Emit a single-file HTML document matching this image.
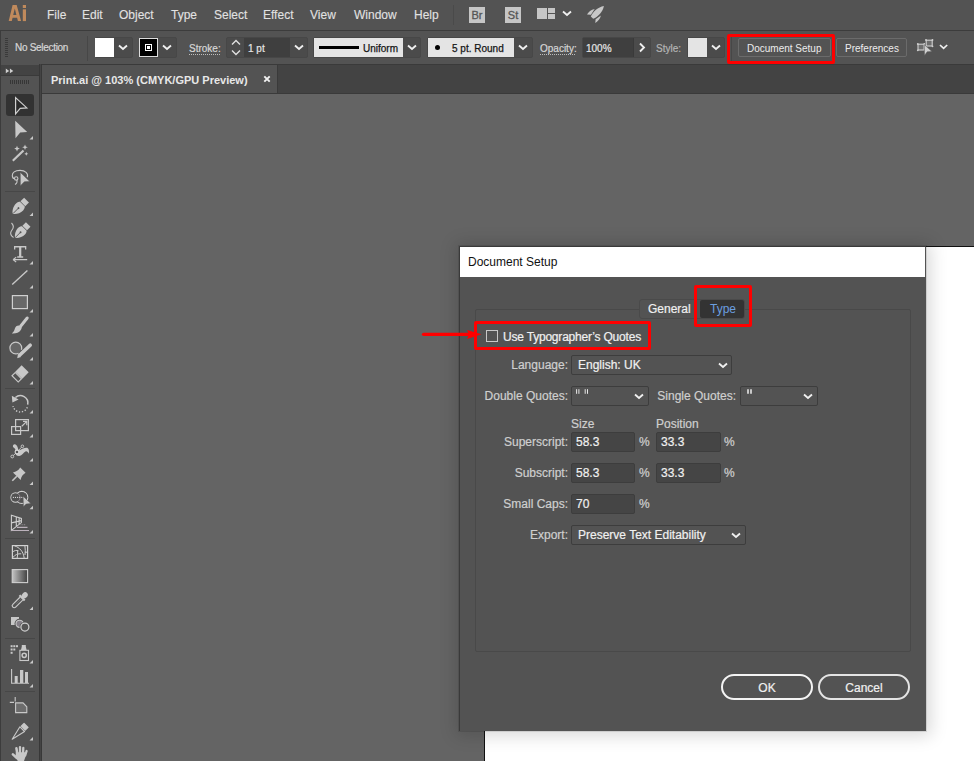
<!DOCTYPE html>
<html><head><meta charset="utf-8">
<style>
*{margin:0;padding:0;box-sizing:border-box}
html,body{width:974px;height:761px;overflow:hidden;background:#646464;font-family:"Liberation Sans",sans-serif;position:relative}
.a{position:absolute}
.t{position:absolute;white-space:nowrap;line-height:1}
#menubar{left:0;top:0;width:974px;height:30px;background:#535353}
.menu{color:#e2e2e2;font-size:12px;top:9px;-webkit-text-stroke:0.1px currentColor}
#ctrl{left:0;top:30px;width:974px;height:35px;background:#535353;border-top:1px solid #3c3c3c;border-bottom:1px solid #3c3c3c}
#tabbar{left:42px;top:64px;width:932px;height:30px;background:#434343;border-top:1px solid #3a3a3a;border-bottom:1px solid #3a3a3a}
#tab{left:42px;top:65px;width:236px;height:28px;background:#535353;border-right:1px solid #3a3a3a}
#toolbar{left:0;top:64px;width:39px;height:697px;background:#535353}
#tbgap{left:39px;top:64px;width:3px;height:697px;background:#3b3b3b;border-left:1px solid #383838;border-right:1px solid #383838;background:#444}
#tbhead{left:0;top:65px;width:39px;height:11px;background:#434343;border-bottom:1px solid #3a3a3a}
.lbl{color:#d6d6d6;font-size:10px}
.fld{background:#454545;border:1px solid #3e3e3e;border-radius:2px}
.sep{background:#464646}
#artboard{left:484px;top:246px;width:500px;height:600px;background:#fff;border-left:1px solid #111;border-top:1px solid #111}
#dlg{left:459px;top:246px;width:467px;height:485px;background:#535353;border-left:1px solid #3a3a3a;border-top:1px solid #3a3a3a;box-shadow:0 0 0 1px rgba(0,0,0,0.1),1px 1px 16px 4px rgba(0,0,0,0.15)}
#dlgtitle{left:460px;top:247px;width:465px;height:30px;background:#fff}
.dl{color:#cfcfcf;font-size:12px}
.dv{color:#f0f0f0;font-size:12px}
.dd{background:#535353;border:1px solid #3d3d3d;border-radius:2px}
.inp{background:#454545;border:1px solid #3d3d3d;border-radius:2px}
.red{border:3px solid #ff0000;border-radius:2px}
.dl,.dv,.lbl{-webkit-text-stroke:0.2px currentColor}
</style></head><body>
<!-- menu bar -->
<div id="menubar" class="a"></div>
<svg class="a" style="left:0;top:0" width="30" height="30"><path fill-rule="evenodd" d="M8.7 21.1 L12.6 5 H16.7 L21.1 21.1 H17.9 L17.1 17.8 H12.6 L11.8 21.1 Z M13.2 14.9 H16.4 L14.8 8.4 Z" fill="#c08a5c"/><rect x="22.8" y="5" width="3.2" height="3" fill="#c08a5c"/><rect x="22.8" y="9.3" width="3.2" height="11.8" fill="#c08a5c"/></svg>
<div class="t menu" style="left:47px">File</div>
<div class="t menu" style="left:82px">Edit</div>
<div class="t menu" style="left:119px">Object</div>
<div class="t menu" style="left:171px">Type</div>
<div class="t menu" style="left:214px">Select</div>
<div class="t menu" style="left:263px">Effect</div>
<div class="t menu" style="left:310px">View</div>
<div class="t menu" style="left:354px">Window</div>
<div class="t menu" style="left:414px">Help</div>
<div class="a" style="left:453px;top:5px;width:1px;height:20px;background:#4a4a4a"></div>
<div class="a" style="left:469px;top:7px;width:16px;height:16px;background:#c6c6c6"></div>
<div class="t" style="left:469px;top:10px;width:16px;text-align:center;font-size:11px;color:#555;-webkit-text-stroke:0.3px #555">Br</div>
<div class="a" style="left:505px;top:7px;width:16px;height:16px;background:#c6c6c6"></div>
<div class="t" style="left:505px;top:10px;width:16px;text-align:center;font-size:11px;color:#555;-webkit-text-stroke:0.3px #555">St</div>
<div class="a" style="left:537px;top:8px;width:10px;height:11px;background:#c6c6c6"></div>
<div class="a" style="left:548px;top:8px;width:7px;height:5px;background:#c6c6c6"></div>
<div class="a" style="left:548px;top:14px;width:7px;height:5px;background:#c6c6c6"></div>
<svg class="a" style="left:562px;top:10px" width="10" height="7"><path d="M1 1.5 L5 5 L9 1.5" fill="none" stroke="#f0f0f0" stroke-width="1.85"/></svg>
<svg class="a" style="left:582px;top:2px" width="26" height="24" viewBox="582 2 26 24"><path d="M603.9 5.9 C598 7, 593 11.5, 590.8 16.6 L593.2 18.8 C598.3 16.5, 602.8 11.8, 603.9 5.9 Z M594.7 9 C591 9.8, 588.5 12, 587 14.6 L590.9 14.8 Z M600.9 15.6 L595.6 19.2 L595.3 23 C598 21.5, 600.3 18.5, 600.9 15.6 Z" fill="#c8c8c8"/></svg>

<!-- control bar -->
<div id="ctrl" class="a"></div>
<div class="a" style="left:0;top:31px;width:1px;height:33px;background:#3c3c3c"></div>
<!-- grip -->
<div class="a" style="left:5px;top:38px;width:3px;height:19px;background:repeating-linear-gradient(#3a3a3a 0 1px,transparent 1px 2px)"></div>
<div class="t lbl" style="left:15px;top:43px;letter-spacing:-0.3px">No Selection</div>
<div class="a" style="left:87px;top:36px;width:1px;height:25px;background:#474747"></div>
<!-- fill -->
<div class="a fld" style="left:95px;top:37px;width:38px;height:21px;background:#4b4b4b;border-color:#474747"></div>
<div class="a" style="left:95px;top:38px;width:19px;height:19px;background:#fff"></div>
<svg class="a" style="left:118px;top:44px" width="10" height="7"><path d="M1 1.5 L5 5 L9 1.5" fill="none" stroke="#f0f0f0" stroke-width="1.85"/></svg>
<!-- stroke -->
<div class="a fld" style="left:139px;top:37px;width:38px;height:21px;background:#4b4b4b;border-color:#474747"></div>
<div class="a" style="left:139px;top:38px;width:19px;height:19px;background:#000;border:1px solid #ddd"></div>
<div class="a" style="left:145px;top:44px;width:7px;height:7px;border:1px solid #fff"></div>
<div class="a" style="left:147px;top:46px;width:3px;height:3px;background:#fff"></div>
<svg class="a" style="left:162px;top:44px" width="10" height="7"><path d="M1 1.5 L5 5 L9 1.5" fill="none" stroke="#f0f0f0" stroke-width="1.85"/></svg>
<div class="t lbl" style="left:189px;top:44px">Stroke:</div>
<div class="a" style="left:189px;top:54px;width:32px;height:1px;background:repeating-linear-gradient(90deg,#bdbdbd 0 1px,transparent 1px 2px)"></div>
<!-- stroke weight -->
<div class="a fld" style="left:226px;top:37px;width:82px;height:21px;background:#4b4b4b;border-color:#474747"></div>
<div class="a" style="left:244px;top:38px;width:46px;height:19px;background:#3f3f3f"></div>
<svg class="a" style="left:230px;top:38px" width="12" height="19"><path d="M2 6.5 L6 2.5 L10 6.5 M2 12.5 L6 16.5 L10 12.5" fill="none" stroke="#e0e0e0" stroke-width="1.4"/></svg>
<div class="t lbl" style="left:248px;top:44px;color:#e6e6e6">1 pt</div>
<svg class="a" style="left:294px;top:44px" width="10" height="7"><path d="M1 1.5 L5 5 L9 1.5" fill="none" stroke="#f0f0f0" stroke-width="1.85"/></svg>
<!-- uniform -->
<div class="a fld" style="left:313px;top:37px;width:108px;height:21px;background:#4b4b4b;border-color:#474747"></div>
<div class="a" style="left:314px;top:38px;width:89px;height:19px;background:#e4e4e4"></div>
<div class="a" style="left:319px;top:46px;width:40px;height:3px;background:#000"></div>
<div class="t" style="left:363px;top:44px;font-size:10px;color:#151515;-webkit-text-stroke:0.25px #151515">Uniform</div>
<svg class="a" style="left:407px;top:44px" width="10" height="7"><path d="M1 1.5 L5 5 L9 1.5" fill="none" stroke="#f0f0f0" stroke-width="1.85"/></svg>
<!-- profile -->
<div class="a fld" style="left:427px;top:37px;width:106px;height:21px;background:#4b4b4b;border-color:#474747"></div>
<div class="a" style="left:428px;top:38px;width:86px;height:19px;background:#e4e4e4"></div>
<div class="a" style="left:435px;top:45px;width:5px;height:5px;border-radius:50%;background:#000"></div>
<div class="t" style="left:452px;top:44px;font-size:10px;color:#151515;-webkit-text-stroke:0.25px #151515">5 pt. Round</div>
<svg class="a" style="left:518px;top:44px" width="10" height="7"><path d="M1 1.5 L5 5 L9 1.5" fill="none" stroke="#f0f0f0" stroke-width="1.85"/></svg>
<!-- opacity -->
<div class="t lbl" style="left:540px;top:44px">Opacity:</div>
<div class="a" style="left:540px;top:54px;width:36px;height:1px;background:repeating-linear-gradient(90deg,#bdbdbd 0 1px,transparent 1px 2px)"></div>
<div class="a fld" style="left:582px;top:37px;width:69px;height:21px;background:#4b4b4b;border-color:#474747"></div>
<div class="a" style="left:583px;top:38px;width:50px;height:19px;background:#3f3f3f"></div>
<div class="t lbl" style="left:586px;top:44px;color:#e6e6e6">100%</div>
<div class="a" style="left:633px;top:38px;width:1px;height:19px;background:#3a3a3a"></div>
<svg class="a" style="left:638px;top:42px" width="8" height="11"><path d="M2 1.5 L6 5.5 L2 9.5" fill="none" stroke="#f0f0f0" stroke-width="1.85"/></svg>
<!-- style -->
<div class="t lbl" style="left:656px;top:44px;color:#b4b4b4">Style:</div>
<div class="a fld" style="left:687px;top:37px;width:38px;height:21px;background:#4b4b4b;border-color:#474747"></div>
<div class="a" style="left:688px;top:38px;width:19px;height:19px;background:#e4e4e4"></div>
<svg class="a" style="left:711px;top:44px" width="10" height="7"><path d="M1 1.5 L5 5 L9 1.5" fill="none" stroke="#f0f0f0" stroke-width="1.85"/></svg>
<div class="a" style="left:731px;top:36px;width:1px;height:25px;background:#474747"></div>
<!-- buttons -->
<div class="a" style="left:738px;top:38px;width:93px;height:19px;border:1px solid #6b6b6b;border-radius:2px"></div>
<div class="t" style="left:747px;top:44px;font-size:10px;color:#ececec">Document Setup</div>
<div class="a" style="left:836px;top:38px;width:71px;height:19px;border:1px solid #6b6b6b;border-radius:2px"></div>
<div class="t" style="left:845px;top:44px;font-size:10px;color:#ececec">Preferences</div>
<div class="a red" style="left:727px;top:34px;width:108px;height:30px"></div>
<!-- icon -->
<svg class="a" style="left:912px;top:36px" width="40" height="22" viewBox="912 36 40 22">
<rect x="918" y="44.2" width="6" height="5.8" fill="#6e6e6e" stroke="#d0d0d0" stroke-width="1.1"/>
<rect x="926.2" y="40.2" width="6" height="5.8" fill="#6e6e6e" stroke="#d0d0d0" stroke-width="1.1"/>
<g fill="#d0d0d0"><circle cx="917.8" cy="44" r="0.9"/><circle cx="917.8" cy="50.3" r="0.9"/><circle cx="924.3" cy="44" r="0.9"/><circle cx="926" cy="40" r="0.9"/><circle cx="932.5" cy="40" r="0.9"/><circle cx="932.5" cy="46.3" r="0.9"/></g>
<path d="M924.2 44.6 L932 51.6 L927.2 51.8 L924.5 55.4 Z" fill="#cfcfcf" stroke="#535353" stroke-width="0.5"/>
<path d="M940 45 L943.6 48.4 L947.2 45" fill="none" stroke="#f0f0f0" stroke-width="1.7"/>
</svg>

<!-- tab bar -->
<div id="tabbar" class="a"></div>
<div id="tab" class="a"></div>
<div class="t" style="left:51px;top:75px;font-size:11px;font-weight:bold;color:#e8e8e8">Print.ai @ 103% (CMYK/GPU Preview)</div>
<svg class="a" style="left:262px;top:74px" width="10" height="10"><path d="M2.3 2.3 L7.7 7.7 M7.7 2.3 L2.3 7.7" stroke="#f2f2f2" stroke-width="1.9"/></svg>

<!-- toolbar -->
<div id="toolbar" class="a"></div>
<div id="tbgap" class="a"></div>
<div id="tbhead" class="a"></div>
<div class="a" style="left:0;top:64px;width:1px;height:697px;background:#3c3c3c"></div>
<svg class="a" style="left:0;top:0" width="40" height="761" viewBox="0 0 40 761">
<defs>
<linearGradient id="gr" x1="0" x2="1"><stop offset="0" stop-color="#c4c4c4"/><stop offset="0.5" stop-color="#808080"/><stop offset="1" stop-color="#404040"/></linearGradient>
</defs>
<g fill="none" stroke="#cfcfcf" stroke-width="1.1">
<path d="M5.8 68.6 L9.2 70.9 L5.8 73.2 Z M9.9 68.6 L13.3 70.9 L9.9 73.2 Z" fill="#cfcfcf" stroke="none"/>
</g>
<g fill="#363636"><rect x="10" y="80" width="1" height="4"/><rect x="12" y="80" width="1" height="4"/><rect x="14" y="80" width="1" height="4"/><rect x="16" y="80" width="1" height="4"/><rect x="18" y="80" width="1" height="4"/><rect x="20" y="80" width="1" height="4"/><rect x="22" y="80" width="1" height="4"/><rect x="24" y="80" width="1" height="4"/><rect x="26" y="80" width="1" height="4"/><rect x="28" y="80" width="1" height="4"/></g>
<rect x="6" y="94" width="28" height="22" rx="3" fill="#323232"/>
<!-- separators -->
<g fill="#474747"><rect x="5" y="191" width="30" height="1"/><rect x="5" y="388" width="30" height="1"/><rect x="5" y="538" width="30" height="1"/><rect x="5" y="638" width="30" height="1"/><rect x="5" y="691" width="30" height="1"/></g>
<!-- corner triangles -->
<g fill="#c8c8c8">
<path d="M33 136 V139.5 H29.5 Z"/><path d="M33 212.5 V216 H29.5 Z"/><path d="M33 261 V264.5 H29.5 Z"/><path d="M33 285 V288.5 H29.5 Z"/>
<path d="M33 309 V312.5 H29.5 Z"/><path d="M33 333 V336.5 H29.5 Z"/><path d="M33 357 V360.5 H29.5 Z"/><path d="M33 381 V384.5 H29.5 Z"/>
<path d="M33 410 V413.5 H29.5 Z"/><path d="M33 434 V437.5 H29.5 Z"/><path d="M33 458 V461.5 H29.5 Z"/><path d="M33 481.5 V485 H29.5 Z"/>
<path d="M33 505.8 V509.3 H29.5 Z"/><path d="M33 530 V533.5 H29.5 Z"/><path d="M33 606.6 V610.1 H29.5 Z"/><path d="M33 660 V663.5 H29.5 Z"/>
<path d="M33 684 V687.5 H29.5 Z"/><path d="M33 737 V740.5 H29.5 Z"/>
</g>
<!-- selection -->
<path d="M15.6 97.6 L26.8 107.9 L20.2 108.3 L15.6 113.8 Z" fill="#2a2a2a" stroke="#d0d0d0" stroke-width="1.2" stroke-linejoin="miter"/>
<!-- direct selection -->
<path d="M15.2 120.8 L27.2 132 L20.2 132.6 L15.5 138.2 Z" fill="#c8c8c8"/>
<!-- magic wand -->
<path d="M12.8 160.8 L23.5 150.5" stroke="#c8c8c8" stroke-width="2.2"/>
<path d="M17 145.8 L17.8 147.8 L19.8 148.6 L17.8 149.4 L17 151.4 L16.2 149.4 L14.2 148.6 L16.2 147.8 Z M25 144.5 L25.8 146.5 L27.8 147.3 L25.8 148.1 L25 150.1 L24.2 148.1 L22.2 147.3 L24.2 146.5 Z M26.3 151.8 L26.9 153.2 L28.3 153.8 L26.9 154.4 L26.3 155.8 L25.7 154.4 L24.3 153.8 L25.7 153.2 Z" fill="#c8c8c8"/>
<!-- lasso -->
<path d="M27.3 177.2 C28.6 173.6, 25.2 170.4, 20 170.4 C14.8 170.4, 12.2 172.6, 12.3 175.6 C12.4 177.4, 13.4 178.6, 14.6 178.6" fill="none" stroke="#c8c8c8" stroke-width="1.1"/>
<circle cx="16.2" cy="178.4" r="1.7" fill="none" stroke="#c8c8c8" stroke-width="1.1"/>
<path d="M16.8 180 C17.4 181.8, 16.6 183.6, 15 184.4" fill="none" stroke="#c8c8c8" stroke-width="1.1"/>
<path d="M20.2 172.2 L29.9 181.6 L24.4 181.8 L20.3 185.9 Z" fill="#c8c8c8" stroke="#535353" stroke-width="0.6"/>
<!-- pen -->
<g transform="translate(20.3,206.3) rotate(45)"><path d="M0 10.6 C-2.2 9.6, -5.2 5, -5 1 C-4.9 -1, -4 -2.4, -3.4 -3 L3.4 -3 C4 -2.4, 4.9 -1, 5 1 C5.2 5, 2.2 9.6, 0 10.6 Z" fill="#c8c8c8"/><rect x="-3.4" y="-8.8" width="6.8" height="5.2" fill="#c8c8c8"/><path d="M0 10.2 V3" stroke="#535353" stroke-width="0.9"/><circle cx="0" cy="2.6" r="1" fill="#535353"/></g>
<!-- curvature pen -->
<g transform="translate(22.3,230.5) rotate(45) scale(0.95)"><path d="M0 10.6 C-2.2 9.6, -5.2 5, -5 1 C-4.9 -1, -4 -2.4, -3.4 -3 L3.4 -3 C4 -2.4, 4.9 -1, 5 1 C5.2 5, 2.2 9.6, 0 10.6 Z" fill="#c8c8c8"/><rect x="-3.4" y="-8.8" width="6.8" height="5.2" fill="#c8c8c8"/><path d="M0 10.2 V3" stroke="#535353" stroke-width="0.9"/><circle cx="0" cy="2.6" r="1" fill="#535353"/></g>
<path d="M11.5 223 C 13.5 225, 14 227.5, 12 230 C 10 232.5, 10 235.5, 13.5 237.5" fill="none" stroke="#c8c8c8" stroke-width="1.1"/>
<!-- type -->
<path d="M14 246 H26.3 V249.5 H25 V247.6 H21.3 V256.2 H23.2 V257.8 H17.2 V256.2 H19.1 V247.6 H15.3 V249.5 H14 Z" fill="#c8c8c8"/>
<path d="M13 259.6 H27.2 M13 259.6 L16.2 257.2 M13 259.6 L16.2 262" stroke="#c8c8c8" stroke-width="1.1" fill="none"/>
<!-- line -->
<path d="M12.2 284.6 L27.4 270.6" stroke="#c8c8c8" stroke-width="1.4"/>
<!-- rect -->
<rect x="12.4" y="295.6" width="15" height="13" fill="#686868" stroke="#cfcfcf" stroke-width="1.2"/>
<!-- brush -->
<path d="M27.2 318 L20.8 326" stroke="#c8c8c8" stroke-width="3" stroke-linecap="round"/>
<path d="M21.5 326.5 C19 324.5, 15.5 325.5, 14.8 328.8 C14.3 331, 13.2 332.5, 11.8 333.4 C15.5 333.8, 19 332.6, 20.6 330.2 C21.6 328.8, 22 327.5, 21.5 326.5 Z" fill="#c8c8c8"/>
<!-- shaper -->
<path d="M18.5 353.2 C17.8 353.6, 16.8 353.9, 15.8 353.9 C12.5 353.9, 9.9 351.3, 9.9 348 C9.9 344.7, 12.5 342.1, 15.8 342.1 C19.1 342.1, 21.7 344.7, 21.7 348 C21.7 348.6, 21.6 349.2, 21.4 349.7" fill="#666" stroke="#c8c8c8" stroke-width="1.2"/>
<path d="M30.2 345.2 L19.8 355" stroke="#c8c8c8" stroke-width="3.6" stroke-linecap="round"/>
<path d="M17.2 358.2 L18 354 L21 357 Z" fill="#c8c8c8"/>
<!-- eraser -->
<g transform="translate(20,374) rotate(45)"><rect x="-5" y="-7.3" width="10" height="9" fill="#c8c8c8"/><rect x="-4.4" y="2.3" width="8.8" height="4.6" fill="none" stroke="#c8c8c8" stroke-width="1.2"/></g>
<!-- rotate -->
<path d="M15.4 397.5 A7.5 7.5 0 0 1 27.7 404.6" fill="none" stroke="#c8c8c8" stroke-width="1.5"/>
<path d="M27.3 407.2 A7.5 7.5 0 0 1 13 406.2" fill="none" stroke="#c8c8c8" stroke-width="1.4" stroke-dasharray="1.3 1.7"/>
<path d="M11.8 395.8 L18.6 399.4 L12.4 402.4 Z" fill="#c8c8c8"/>
<!-- scale -->
<rect x="15.6" y="419.6" width="12.8" height="11" fill="none" stroke="#c8c8c8" stroke-width="1.2"/>
<rect x="11.6" y="426.6" width="9" height="7.8" fill="none" stroke="#c8c8c8" stroke-width="1.2"/>
<path d="M21.8 426.2 L26.8 421.4 M23 421.4 H26.8 V425.2" fill="none" stroke="#c8c8c8" stroke-width="1.2"/>
<!-- puppet warp -->
<path d="M13 447 C12.5 445, 14 443.8, 15.5 444.5 C17.5 445.5, 18 448, 18.5 450.5 C21 449.5, 24 448, 26.5 447.8 C28.5 447.8, 29.5 450.5, 28.8 453.8 C28 452, 27 451, 25.5 451.5 C23.5 452.5, 22 455.5, 19.5 456 C17 456.3, 15 455, 15.5 452.5 C16 450.5, 15.5 448.5, 13 447 Z" fill="#c8c8c8"/>
<path d="M12.3 456.5 L17 452 L22.4 446.3" stroke="#c8c8c8" stroke-width="0.9" fill="none"/>
<circle cx="17" cy="452" r="1.9" fill="#535353" stroke="#d8d8d8" stroke-width="1.1"/>
<circle cx="22.4" cy="446.3" r="1.3" fill="#535353" stroke="#d0d0d0" stroke-width="0.9"/>
<circle cx="12.3" cy="456.5" r="1.4" fill="#535353" stroke="#d0d0d0" stroke-width="0.9"/>
<!-- pin -->
<g transform="translate(19.85,473.2) rotate(45)"><path d="M-3.8 -4.3 H3.8 Q2.6 0.5, 5.45 4.3 H-5.45 Q-2.6 0.5, -3.8 -4.3 Z" fill="#c8c8c8"/><rect x="-0.8" y="4.3" width="1.6" height="6.4" fill="#c8c8c8"/></g>
<!-- shape builder -->
<clipPath id="cB"><circle cx="21.8" cy="497.4" r="5.6"/></clipPath>
<circle cx="15.5" cy="497.5" r="4.6" fill="none" stroke="#cfcfcf" stroke-width="1.1"/>
<circle cx="21.8" cy="497.4" r="6" fill="none" stroke="#cfcfcf" stroke-width="1.1"/>
<circle cx="15.5" cy="497.5" r="4.05" fill="#535353"/>
<circle cx="21.8" cy="497.4" r="5.45" fill="#535353"/>
<circle cx="15.5" cy="497.5" r="4.6" fill="none" stroke="#948a94" stroke-width="0.9" clip-path="url(#cB)"/>
<g fill="#d8d8d8"><circle cx="13.4" cy="497.4" r="0.6"/><circle cx="15.5" cy="497.4" r="0.6"/><circle cx="17.6" cy="497.4" r="0.6"/><circle cx="19.7" cy="497.4" r="0.6"/><circle cx="21.8" cy="497.4" r="0.6"/></g>
<path d="M23.1 496.2 L30.9 503.6 L26.1 504.1 L23.4 506.8 Z" fill="#c8c8c8" stroke="#535353" stroke-width="0.5"/>
<!-- perspective grid -->
<g fill="none" stroke="#cfcfcf" stroke-width="1.1">
<path d="M11.4 515.2 V530.4 L21.4 522.6 V518.4 Z M16.3 516.6 V526.6 M19.1 517.6 V524.4 M11.4 522.9 L21.4 520.6"/>
<path d="M11.4 530.5 H29 M17 527.4 H27.5" stroke="#bcb2bc"/>
<path d="M20.5 524.8 H26" stroke="#9a949a" stroke-dasharray="1 0.8"/>
</g>
<!-- mesh -->
<rect x="12.4" y="545.6" width="15.2" height="12.8" fill="none" stroke="#d2d2d2" stroke-width="1.2"/>
<path d="M14.5 545.8 C19.5 547.5, 23.5 551.5, 24.2 558.3 M24.9 545.8 C25.4 549, 25.4 552, 25 555 M25 552.2 H27.8 M12.4 552 C14.5 550.5, 16.5 550, 18.5 550.8 M12.6 557.8 C15 554.5, 18 553.5, 21.2 553.8 M17.6 550.5 C17.9 553, 17.6 556, 17.1 558.3" fill="none" stroke="#cfcfcf" stroke-width="1"/>
<!-- gradient -->
<rect x="12.2" y="569.6" width="15.4" height="13" fill="url(#gr)" stroke="#cfcfcf" stroke-width="1.1"/>
<!-- eyedropper -->
<g transform="translate(19.6,600.4) rotate(45)"><ellipse cx="0" cy="-7.2" rx="2.7" ry="3.4" fill="#c8c8c8"/><rect x="-3.7" y="-4.6" width="7.4" height="2.2" fill="#c8c8c8"/><path d="M-2 -2.4 V7.6 A2 2 0 0 0 2 7.6 V-2.4" fill="none" stroke="#c8c8c8" stroke-width="1.2"/><path d="M0 -2.2 V4.5" stroke="#8a8a8a" stroke-width="0.8" stroke-dasharray="0.8 0.6"/></g>
<!-- blend -->
<rect x="11" y="617" width="8" height="8" fill="#c8c8c8"/>
<circle cx="19.6" cy="623.8" r="3.8" fill="#858088" stroke="#535353" stroke-width="2.6"/>
<circle cx="19.6" cy="623.8" r="3.6" fill="#858088" stroke="#c8c8c8" stroke-width="1.1"/>
<circle cx="24.9" cy="627.1" r="4.1" fill="#535353" stroke="#535353" stroke-width="2.6"/>
<circle cx="24.9" cy="627.1" r="4" fill="#535353" stroke="#cfcfcf" stroke-width="1.2"/>
<!-- symbol sprayer -->
<g fill="#c8c8c8"><rect x="10.6" y="645.2" width="2" height="2"/><rect x="13.3" y="645.2" width="2" height="2"/><rect x="16" y="645.2" width="2" height="2"/><rect x="10.6" y="648.5" width="2" height="2"/><rect x="13.3" y="648.5" width="2" height="2"/><rect x="10.6" y="651.8" width="2" height="2"/><path d="M21.8 645 H25.8 V646.5 L26.6 650 H21 L21.8 646.5 Z"/></g>
<rect x="19.9" y="650.3" width="8.6" height="10.2" fill="none" stroke="#c8c8c8" stroke-width="1.1"/>
<circle cx="24.2" cy="655.3" r="2.1" fill="none" stroke="#c8c8c8" stroke-width="1.5"/>
<!-- column graph -->
<path d="M11.6 669 V683.2 H29" fill="none" stroke="#c8c8c8" stroke-width="1.1"/>
<g fill="#c8c8c8"><rect x="14.7" y="676" width="3" height="7"/><rect x="20" y="670" width="3.3" height="13"/><rect x="25" y="672" width="3" height="11"/></g>
<!-- artboard -->
<path d="M15.2 697 V701.6 M9.8 702.4 H14" stroke="#c8c8c8" stroke-width="1.1"/>
<path d="M15.6 702.9 H23 L26.8 706.8 V712.6 H15.6 Z" fill="#6c6c6c" stroke="#c8c8c8" stroke-width="1.1"/>
<!-- slice -->
<g transform="translate(20.4,731) rotate(45)"><path d="M0 11.6 L-3.3 -2.6 H3.3 Z" fill="none" stroke="#c8c8c8" stroke-width="1.1" stroke-linejoin="round"/><rect x="-3.4" y="-8.6" width="6.8" height="5.2" rx="0.6" fill="#c8c8c8"/></g>
<!-- hand -->
<g stroke="#c8c8c8" stroke-linecap="round" fill="none"><path d="M16.4 748.3 L17.3 753.5" stroke-width="2.5"/><path d="M20 747.1 V752.5" stroke-width="2.3"/><path d="M23.3 748 L23.1 753" stroke-width="2.3"/><path d="M26.6 751 L25.2 755.5" stroke-width="2.3"/><path d="M12.9 754.4 L16.6 757.8" stroke-width="2.6"/></g>
<path d="M15.8 752.2 H26 L25.2 757.5 L24 761 H17.8 L15.6 757.5 Z" fill="#c8c8c8"/>
</svg>

<!-- artboard + dialog -->
<div id="artboard" class="a"></div>
<div id="dlg" class="a"></div>
<div id="dlgtitle" class="a"></div>
<div class="t" style="left:468px;top:256px;font-size:12px;color:#111">Document Setup</div>
<!-- panel -->
<div class="a" style="left:475px;top:309px;width:436px;height:343px;border:1px solid #494949;border-radius:2px"></div>
<!-- tabs -->
<div class="a" style="left:639px;top:299px;width:106px;height:20px;background:#535353;border:1px solid #4a4a4a;border-radius:3px"></div>
<div class="a" style="left:700px;top:300px;width:44px;height:18px;background:#333;border-radius:2px"></div>
<div class="t dv" style="left:648px;top:303px">General</div>
<div class="t" style="left:710px;top:303px;font-size:12px;color:#6b9fe0">Type</div>
<div class="a red" style="left:694px;top:285px;width:58px;height:42px"></div>
<!-- checkbox -->
<div class="a" style="left:486px;top:330px;width:12px;height:12px;border:1px solid #c8c8c8"></div>
<div class="t dv" style="left:503px;top:331px;letter-spacing:-0.2px">Use Typographer’s Quotes</div>
<div class="a red" style="left:474px;top:321px;width:177px;height:29px"></div>
<svg class="a" style="left:418px;top:326px" width="66" height="16"><path d="M5.5 8.3 H51" stroke="#ff0000" stroke-width="3.2" stroke-linecap="round"/><path d="M49 4 L63.5 8.3 L49 13 L51 8.3 Z" fill="#ff0000"/></svg>
<!-- language -->
<div class="t dl" style="left:468px;width:100px;text-align:right;top:359px">Language:</div>
<div class="a dd" style="left:571px;top:355px;width:161px;height:20px"></div>
<div class="t dv" style="left:578px;top:359px">English: UK</div>
<svg class="a" style="left:718px;top:362px" width="10" height="7"><path d="M1 1.5 L5 5 L9 1.5" fill="none" stroke="#f0f0f0" stroke-width="1.85"/></svg>
<!-- quotes -->
<div class="t dl" style="left:468px;width:100px;text-align:right;top:390px">Double Quotes:</div>
<div class="a dd" style="left:571px;top:386px;width:78px;height:20px"></div>
<svg class="a" style="left:575px;top:388px" width="16" height="8"><path d="M1.6 1.2 V5.8 M3.9 1.2 V5.8 M10.2 1.2 V5.8 M12.5 1.2 V5.8" stroke="#e8e8e8" stroke-width="1"/></svg>
<svg class="a" style="left:634px;top:393px" width="10" height="7"><path d="M1 1.5 L5 5 L9 1.5" fill="none" stroke="#f0f0f0" stroke-width="1.85"/></svg>
<div class="t dl" style="left:636px;width:100px;text-align:right;top:390px">Single Quotes:</div>
<div class="a dd" style="left:740px;top:386px;width:78px;height:20px"></div>
<svg class="a" style="left:746px;top:388px" width="8" height="8"><path d="M2 1.2 V5.8 M5 1.2 V5.8" stroke="#f0f0f0" stroke-width="1.5"/></svg>
<svg class="a" style="left:803px;top:393px" width="10" height="7"><path d="M1 1.5 L5 5 L9 1.5" fill="none" stroke="#f0f0f0" stroke-width="1.85"/></svg>
<!-- size/position -->
<div class="t dl" style="left:571px;top:418px">Size</div>
<div class="t dl" style="left:656px;top:418px">Position</div>
<div class="t dl" style="left:468px;width:100px;text-align:right;top:436px">Superscript:</div>
<div class="a inp" style="left:571px;top:432px;width:64px;height:20px"></div>
<div class="t dv" style="left:576px;top:436px">58.3</div>
<div class="t dl" style="left:639px;top:436px">%</div>
<div class="a inp" style="left:656px;top:432px;width:65px;height:20px"></div>
<div class="t dv" style="left:661px;top:436px">33.3</div>
<div class="t dl" style="left:724px;top:436px">%</div>
<div class="t dl" style="left:468px;width:100px;text-align:right;top:467px">Subscript:</div>
<div class="a inp" style="left:571px;top:463px;width:64px;height:20px"></div>
<div class="t dv" style="left:576px;top:467px">58.3</div>
<div class="t dl" style="left:639px;top:467px">%</div>
<div class="a inp" style="left:656px;top:463px;width:65px;height:20px"></div>
<div class="t dv" style="left:661px;top:467px">33.3</div>
<div class="t dl" style="left:724px;top:467px">%</div>
<div class="t dl" style="left:468px;width:100px;text-align:right;top:498px">Small Caps:</div>
<div class="a inp" style="left:571px;top:494px;width:64px;height:20px"></div>
<div class="t dv" style="left:576px;top:498px">70</div>
<div class="t dl" style="left:639px;top:498px">%</div>
<div class="t dl" style="left:468px;width:100px;text-align:right;top:529px">Export:</div>
<div class="a dd" style="left:571px;top:525px;width:175px;height:20px"></div>
<div class="t dv" style="left:578px;top:529px">Preserve Text Editability</div>
<svg class="a" style="left:731px;top:532px" width="10" height="7"><path d="M1 1.5 L5 5 L9 1.5" fill="none" stroke="#f0f0f0" stroke-width="1.85"/></svg>
<!-- buttons -->
<div class="a" style="left:721px;top:674px;width:92px;height:26px;border:2px solid #f4f4f4;border-radius:13px"></div>
<div class="t dv" style="left:721px;width:92px;text-align:center;top:682px">OK</div>
<div class="a" style="left:818px;top:674px;width:92px;height:26px;border:2px solid #e4e4e4;border-radius:13px"></div>
<div class="t dv" style="left:818px;width:92px;text-align:center;top:682px">Cancel</div>

</body></html>
